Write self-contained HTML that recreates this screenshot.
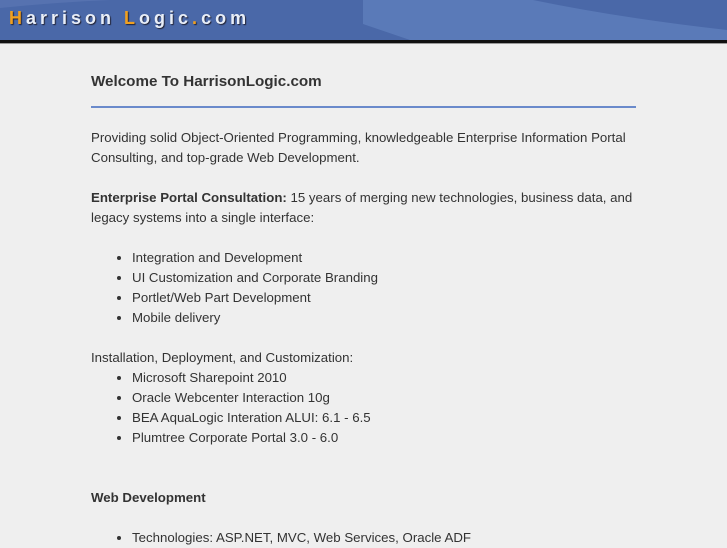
<!DOCTYPE html>
<html><head><meta charset="utf-8">
<style>
html,body{margin:0;padding:0;width:727px;height:545px;overflow:hidden;background:#efefef;}
body{font-family:"Liberation Sans",sans-serif;color:#333;font-size:13.25px;line-height:20px;}
#hdr{position:absolute;left:0;top:0;width:727px;height:40px;background:#4a68a8;overflow:hidden;}
#bar{position:absolute;left:0;top:40px;width:727px;height:3px;background:#111;}
#bar2{position:absolute;left:0;top:43px;width:727px;height:1px;background:#999;}
#logo{position:absolute;left:9px;top:6px;font-size:18px;font-weight:bold;letter-spacing:4px;color:#e8eef8;text-shadow:1px 1px 1px #223;line-height:24px;}
#logo b{color:#f0a020;}
#c{position:absolute;left:91px;top:72px;width:548px;}
h1{font-size:15.2px;font-weight:bold;margin:0;line-height:20px;color:#333;}
hr{border:0;height:2px;background:#6a8acb;margin:14px 0 0 0;width:545px;}
p{margin:0;}
ul{margin:0;padding-left:41px;}
li{list-style:disc;}
</style></head><body>
<div id="hdr">
<svg width="727" height="40" style="position:absolute;left:0;top:0">
<path d="M363 0 L533 0 Q620 18 727 30 L727 40 L410 40 L363 24 Z" fill="#5a7ab8"/>
<path d="M0 8 Q60 2 110 0 L0 0 Z" fill="#5672b0"/>
</svg>
<div id="logo"><b>H</b>arrison <b>L</b>ogic<b>.</b>com</div>
</div>
<div id="bar"></div><div id="bar2"></div>
<div id="c">
<h1>Welcome To HarrisonLogic.com</h1>
<hr>
<p style="margin-top:20px">Providing solid Object-Oriented Programming, knowledgeable Enterprise Information Portal Consulting, and top-grade Web Development.</p>
<p style="margin-top:20px"><b>Enterprise Portal Consultation:</b> 15 years of merging new technologies, business data, and legacy systems into a single interface:</p>
<ul style="margin-top:20px">
<li>Integration and Development</li>
<li>UI Customization and Corporate Branding</li>
<li>Portlet/Web Part Development</li>
<li>Mobile delivery</li>
</ul>
<p style="margin-top:20px">Installation, Deployment, and Customization:</p>
<ul>
<li>Microsoft Sharepoint 2010</li>
<li>Oracle Webcenter Interaction 10g</li>
<li>BEA AquaLogic Interation ALUI: 6.1 - 6.5</li>
<li>Plumtree Corporate Portal 3.0 - 6.0</li>
</ul>
<p style="margin-top:40px"><b>Web Development</b></p>
<ul style="margin-top:20px">
<li>Technologies: ASP.NET, MVC, Web Services, Oracle ADF</li>
</ul>
</div>
</body></html>
